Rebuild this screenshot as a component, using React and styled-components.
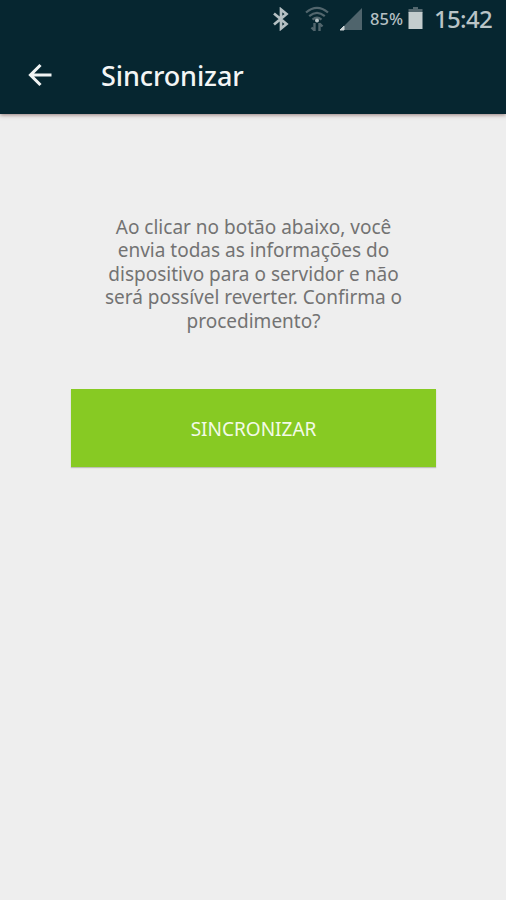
// src/App.jsx
import React from 'react';
import styled, { createGlobalStyle } from 'styled-components';

const GlobalStyle = createGlobalStyle`
  * {
    box-sizing: border-box;
  }

  body {
    margin: 0;
    background-color: #eeeeee;
    font-family: 'Noto Sans', 'Open Sans', sans-serif;
  }
`;

const Screen = styled.div`
  display: flex;
  flex-direction: column;
  width: 506px;
  height: 900px;
  overflow: hidden;
  background-color: #eeeeee;
`;

const Header = styled.header`
  height: 114px;
  flex-shrink: 0;
  background-color: #062630;
  box-shadow: 0 1px 4px rgba(90, 50, 45, 0.6);
`;

const StatusBar = styled.div`
  display: flex;
  align-items: center;
  justify-content: flex-end;
  height: 38px;
  padding-right: 12px;
`;

const StatusIcon = styled.svg`
  display: block;
  flex-shrink: 0;
  margin-right: ${(props) => props.$gap}px;
`;

const Battery = styled.span`
  width: 34px;
  margin-right: 4px;
  color: #b4bfc2;
  font-size: 16.5px;
  font-weight: 500;
  line-height: 38px;
  letter-spacing: 0;
  white-space: nowrap;
`;

const Clock = styled.span`
  width: 60px;
  color: #bac4c6;
  font-size: 24px;
  font-weight: 500;
  line-height: 38px;
  letter-spacing: -0.7px;
  white-space: nowrap;
`;

const Toolbar = styled.div`
  display: flex;
  align-items: center;
  height: 76px;
  padding-left: 28px;
`;

const BackButton = styled.button`
  display: flex;
  width: 24px;
  margin: 0 49px 2px 0;
  padding: 0;
  border: none;
  background: none;
  cursor: pointer;
`;

const Title = styled.h1`
  margin: 0;
  color: #f3f5f5;
  font-size: 27px;
  font-weight: 500;
  line-height: 76px;
  letter-spacing: -0.1px;
`;

const Content = styled.main`
  display: flex;
  flex-direction: column;
  padding: 102px 70px 0 71px;
`;

const Message = styled.p`
  margin: 0 0 56px;
  color: #737373;
  font-size: 19px;
  line-height: 23.4px;
  text-align: center;
  white-space: nowrap;
`;

const Button = styled.button`
  height: 78px;
  padding: 2px 0 0;
  border: none;
  background-color: #87ca23;
  box-shadow: 0 1px 1px rgba(100, 110, 80, 0.35);
  color: #f3fae8;
  font-family: inherit;
  font-size: 19px;
  cursor: pointer;
`;

const BluetoothIcon = () => (
  <StatusIcon width="18" height="24" viewBox="0 0 18 24" $gap={15}>
    <path
      d="M2 6.5 L14.5 17 L9 21.5 V2.5 L14.5 7 L2 17.5"
      fill="none"
      stroke="#b5c0c3"
      strokeWidth="2.7"
    />
  </StatusIcon>
);

const WifiIcon = () => (
  <StatusIcon width="24" height="26" viewBox="0 0 24 26" $gap={10}>
    <g fill="none" stroke="#52666d" strokeWidth="2.2">
      <path d="M1 6.5 Q12 -2.8 23 6.5" />
      <path d="M4.2 10.2 Q12 3.4 19.8 10.2" />
      <path d="M7.5 13.6 Q12 9.6 16.5 13.6" />
    </g>
    <circle cx="12" cy="14.6" r="2" fill="#b7c2c5" />
    <g fill="none" stroke="#52666d" strokeWidth="2.4">
      <path d="M9.5 17 V25 M6.5 21.5 L9.5 24.5" />
      <path d="M14.5 25 V17 M17.5 20.5 L14.5 17.5" />
    </g>
  </StatusIcon>
);

const SignalIcon = () => (
  <StatusIcon width="24" height="24" viewBox="0 0 24 24" $gap={7}>
    <path d="M23 1 V23 H1 Z" fill="#4f646c" />
    <path d="M5 19 V23 H1 Z" fill="#cbd3d5" stroke="#cbd3d5" />
  </StatusIcon>
);

const BatteryIcon = () => (
  <StatusIcon width="15" height="24" viewBox="0 0 15 24" $gap={11}>
    <path d="M5 0 H10 V2 H14.5 V6 H0.5 V2 H5 Z" fill="#53676e" />
    <rect x="0.5" y="5" width="14" height="17" fill="#c3cccd" />
  </StatusIcon>
);

const BackIcon = () => (
  <svg width="24" height="24" viewBox="0 0 24 24">
    <path
      d="M23.5 12 H3 M12.5 2 L2.5 12 L12.5 22"
      fill="none"
      stroke="#f0f3f3"
      strokeWidth="3.1"
    />
  </svg>
);

const App = () => {
  return (
    <>
      <GlobalStyle />
      <Screen>
        <Header>
          <StatusBar>
            <BluetoothIcon />
            <WifiIcon />
            <SignalIcon />
            <Battery>85%</Battery>
            <BatteryIcon />
            <Clock>15:42</Clock>
          </StatusBar>
          <Toolbar>
            <BackButton aria-label="Voltar">
              <BackIcon />
            </BackButton>
            <Title>Sincronizar</Title>
          </Toolbar>
        </Header>
        <Content>
          <Message>
            Ao clicar no botão abaixo, você
            <br />
            envia todas as informações do
            <br />
            dispositivo para o servidor e não
            <br />
            será possível reverter. Confirma o
            <br />
            procedimento?
          </Message>
          <Button>SINCRONIZAR</Button>
        </Content>
      </Screen>
    </>
  );
};

export default App;
